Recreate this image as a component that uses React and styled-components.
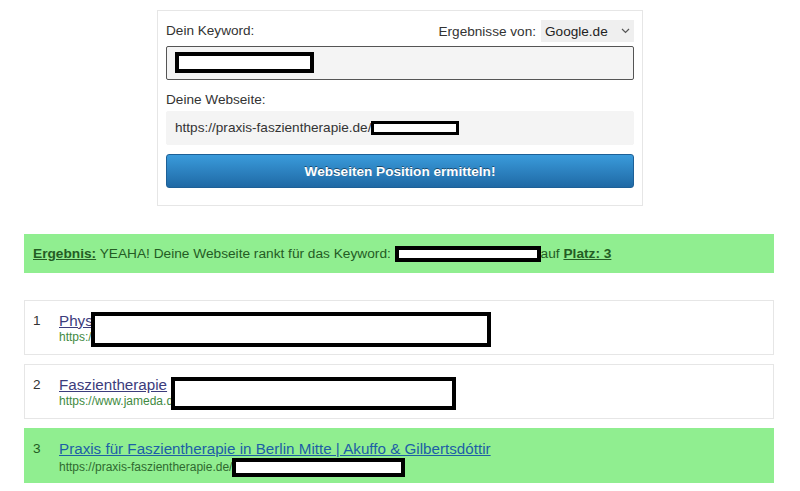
import React from 'react';
import styled, { createGlobalStyle } from 'styled-components';

const GlobalStyle = createGlobalStyle`
  body {
    margin: 0;
    background: #ffffff;
    font-family: "Liberation Sans", Arial, sans-serif;
    color: #333;
  }
`;

const Page = styled.div`
  padding-top: 10px;
`;

const FormPanel = styled.div`
  width: 468px;
  margin: 0 auto;
  border: 1px solid #e6e6e6;
  padding: 8px 8px 17px;
`;

const HeaderRow = styled.div`
  display: flex;
  justify-content: space-between;
  align-items: center;
  height: 24px;
  margin-bottom: 3px;
`;

const Label = styled.div`
  font-size: 13.6px;
  color: #333;
  line-height: 22px;
  padding-top: ${p => p.$gap || 0}px;
`;

const SourceGroup = styled.div`
  display: flex;
  align-items: center;
  gap: 5px;
  font-size: 13.6px;
  color: #333;
`;

const Select = styled.div`
  display: flex;
  align-items: center;
  justify-content: space-between;
  width: 85px;
  height: 22px;
  padding: 0 4px;
  background: #efefef;
  font-size: 13.6px;
  color: #222;
`;

const Field = styled.div`
  box-sizing: border-box;
  height: 34px;
  display: flex;
  align-items: center;
  padding: 0 8px 1px;
  background: #f4f4f4;
  border: 1px solid ${p => (p.$outlined ? '#555' : '#f4f4f4')};
  border-radius: 2px;
  font-size: 13.6px;
  color: #333;
`;

const Redact = styled.span`
  display: inline-block;
  box-sizing: border-box;
  width: ${p => p.$w}px;
  height: ${p => p.$h}px;
  border: ${p => p.$b || 4}px solid #000;
  background: #fff;
  vertical-align: middle;
`;

const Overlay = styled(Redact)`
  position: absolute;
  left: ${p => p.$x}px;
  top: ${p => p.$y}px;
`;

const Button = styled.button`
  display: block;
  width: 100%;
  height: 34px;
  margin-top: 9px;
  border: 1px solid #1d6097;
  border-radius: 3px;
  background: linear-gradient(#3a9bdb, #1f69a5);
  color: #fff;
  font-family: "Liberation Sans", Arial, sans-serif;
  font-size: 13.6px;
  font-weight: bold;
  text-shadow: 0 -1px 0 rgba(0, 0, 0, 0.45);
`;

const Banner = styled.div`
  box-sizing: border-box;
  width: 750px;
  height: 39px;
  margin: 28px 26px 0 24px;
  padding-left: 9px;
  display: flex;
  align-items: center;
  background: #90ee90;
  color: #245c24;
  font-size: 13.7px;
  white-space: pre;
`;

const Strong = styled.b`
  text-decoration: underline;
`;

const List = styled.div`
  width: 750px;
  margin: 27px 26px 0 24px;
  display: flex;
  flex-direction: column;
  gap: 9px;
`;

const Item = styled.div`
  position: relative;
  box-sizing: border-box;
  height: 55px;
  display: flex;
  padding: 11px 0 0 8px;
  border: 1px solid ${p => (p.$hit ? '#90ee90' : '#e6e6e6')};
  background: ${p => (p.$hit ? '#90ee90' : '#fff')};
`;

const Rank = styled.div`
  width: 26px;
  font-size: 13.6px;
  line-height: 18px;
  color: ${p => (p.$hit ? '#245c24' : '#333')};
`;

const Body = styled.div`
  display: flex;
  flex-direction: column;
`;

const Title = styled.a`
  font-size: 15.2px;
  line-height: 18px;
  color: ${p => (p.$hit ? '#1d5fa6' : '#3c3c7c')};
  text-decoration: underline;
`;

const Url = styled.div`
  font-size: 12px;
  line-height: 15px;
  color: ${p => (p.$hit ? '#2f6a2f' : '#3f8a3f')};
  white-space: pre;
`;

export default function App() {
  return (
    <Page>
      <GlobalStyle />
      <FormPanel>
        <HeaderRow>
          <Label>Dein Keyword:</Label>
          <SourceGroup>
            Ergebnisse von:
            <Select>
              Google.de
              <svg width="9" height="6" viewBox="0 0 9 6">
                <path d="M1 1l3.5 3.5L8 1" fill="none" stroke="#555" strokeWidth="1.2" />
              </svg>
            </Select>
          </SourceGroup>
        </HeaderRow>
        <Field $outlined>
          <Redact $w={139} $h={21} />
        </Field>
        <Label $gap={9}>Deine Webseite:</Label>
        <Field>
          https://praxis-faszientherapie.de/
          <Redact $w={88} $h={14} $b={3} />
        </Field>
        <Button>Webseiten Position ermitteln!</Button>
      </FormPanel>

      <Banner>
        <Strong>Ergebnis:</Strong> YEAHA! Deine Webseite rankt für das Keyword: <Redact $w={146} $h={16} />{' '}auf <Strong>Platz: 3</Strong>
      </Banner>

      <List>
        <Item>
          <Rank>1</Rank>
          <Body>
            <Title href="#">Phys</Title>
            <Url>https:/</Url>
          </Body>
          <Overlay $x={66} $y={11} $w={400} $h={35} />
        </Item>
        <Item>
          <Rank>2</Rank>
          <Body>
            <Title href="#">Faszientherapie</Title>
            <Url>https://www.jameda.d</Url>
          </Body>
          <Overlay $x={146} $y={12} $w={285} $h={33} />
        </Item>
        <Item $hit>
          <Rank $hit>3</Rank>
          <Body>
            <Title $hit href="#">Praxis für Faszientherapie in Berlin Mitte | Akuffo &amp; Gilbertsdóttir</Title>
            <Url $hit>
              https://praxis-faszientherapie.de/<Redact $w={173} $h={19} />
            </Url>
          </Body>
        </Item>
      </List>
    </Page>
  );
}
